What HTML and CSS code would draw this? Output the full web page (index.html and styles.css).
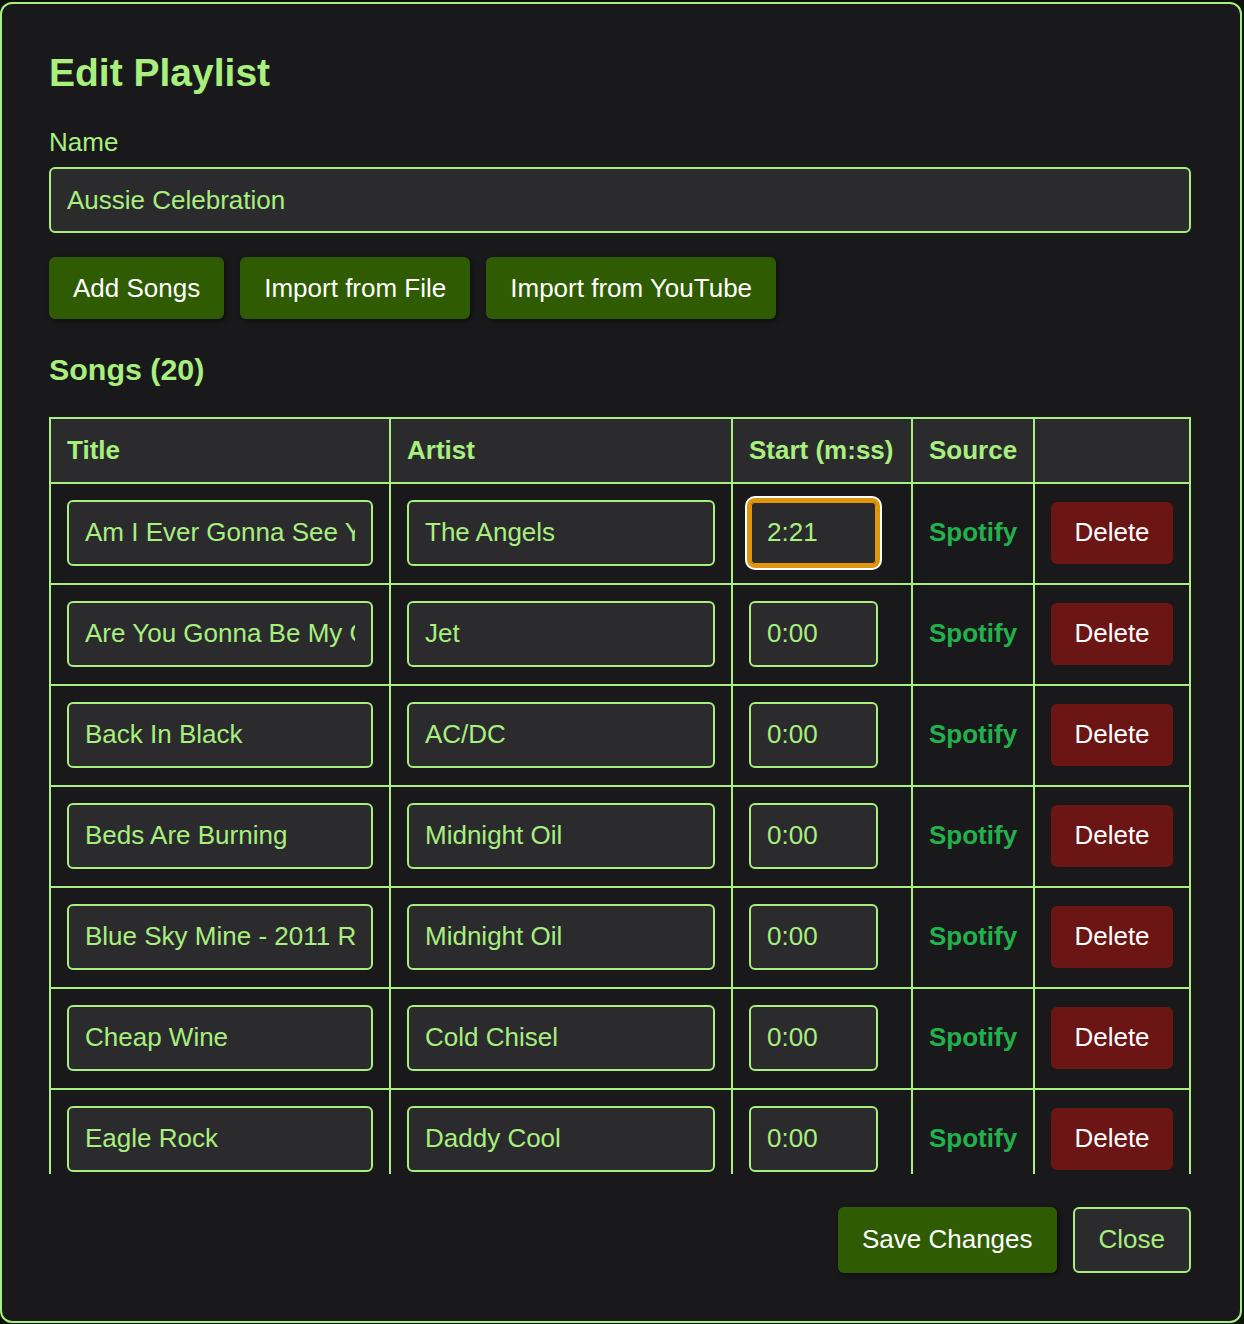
FILE: index.html
```html
<!DOCTYPE html>
<html lang="en">
<head>
<meta charset="UTF-8">
<title>Edit Playlist</title>
<link rel="stylesheet" href="styles.css">
</head>
<body>

<div class="modal">
  <h2 class="modal-title">Edit Playlist</h2>

  <label class="field-label" for="plName">Name</label>
  <input id="plName" class="text-input" value="Aussie Celebration">

  <div class="actions">
    <button type="button" class="btn primary">Add Songs</button>
    <button type="button" class="btn primary">Import from File</button>
    <button type="button" class="btn primary">Import from YouTube</button>
  </div>

  <h3 class="section-title">Songs (20)</h3>

  <!-- songs list -->
  <div class="table-wrap">
    <table class="songs">
      <colgroup>
        <col class="c-title"><col class="c-artist"><col class="c-start"><col class="c-source"><col>
      </colgroup>
      <thead>
        <tr><th>Title</th><th>Artist</th><th>Start (m:ss)</th><th>Source</th><th></th></tr>
      </thead>
      <tbody>
        <tr>
          <td><input class="cell-input" value="Am I Ever Gonna See Your Face Again"></td>
          <td><input class="cell-input" value="The Angels"></td>
          <td><input class="cell-input start focused" value="2:21"></td>
          <td class="source">Spotify</td>
          <td><button type="button" class="btn danger">Delete</button></td>
        </tr>
        <tr>
          <td><input class="cell-input" value="Are You Gonna Be My Girl"></td>
          <td><input class="cell-input" value="Jet"></td>
          <td><input class="cell-input start" value="0:00"></td>
          <td class="source">Spotify</td>
          <td><button type="button" class="btn danger">Delete</button></td>
        </tr>
        <tr>
          <td><input class="cell-input" value="Back In Black"></td>
          <td><input class="cell-input" value="AC/DC"></td>
          <td><input class="cell-input start" value="0:00"></td>
          <td class="source">Spotify</td>
          <td><button type="button" class="btn danger">Delete</button></td>
        </tr>
        <tr>
          <td><input class="cell-input" value="Beds Are Burning"></td>
          <td><input class="cell-input" value="Midnight Oil"></td>
          <td><input class="cell-input start" value="0:00"></td>
          <td class="source">Spotify</td>
          <td><button type="button" class="btn danger">Delete</button></td>
        </tr>
        <tr>
          <td><input class="cell-input" value="Blue Sky Mine - 2011 Remaster"></td>
          <td><input class="cell-input" value="Midnight Oil"></td>
          <td><input class="cell-input start" value="0:00"></td>
          <td class="source">Spotify</td>
          <td><button type="button" class="btn danger">Delete</button></td>
        </tr>
        <tr>
          <td><input class="cell-input" value="Cheap Wine"></td>
          <td><input class="cell-input" value="Cold Chisel"></td>
          <td><input class="cell-input start" value="0:00"></td>
          <td class="source">Spotify</td>
          <td><button type="button" class="btn danger">Delete</button></td>
        </tr>
        <tr>
          <td><input class="cell-input" value="Eagle Rock"></td>
          <td><input class="cell-input" value="Daddy Cool"></td>
          <td><input class="cell-input start" value="0:00"></td>
          <td class="source">Spotify</td>
          <td><button type="button" class="btn danger">Delete</button></td>
        </tr>
        <tr>
          <td><input class="cell-input" value="Friday On My Mind"></td>
          <td><input class="cell-input" value="The Easybeats"></td>
          <td><input class="cell-input start" value="0:00"></td>
          <td class="source">Spotify</td>
          <td><button type="button" class="btn danger">Delete</button></td>
        </tr>
        <tr>
          <td><input class="cell-input" value="Great Southern Land"></td>
          <td><input class="cell-input" value="Icehouse"></td>
          <td><input class="cell-input start" value="0:00"></td>
          <td class="source">Spotify</td>
          <td><button type="button" class="btn danger">Delete</button></td>
        </tr>
        <tr>
          <td><input class="cell-input" value="Holy Grail"></td>
          <td><input class="cell-input" value="Hunters &amp; Collectors"></td>
          <td><input class="cell-input start" value="0:00"></td>
          <td class="source">Spotify</td>
          <td><button type="button" class="btn danger">Delete</button></td>
        </tr>
      </tbody>
    </table>
  </div>

  <div class="footer">
    <button type="button" class="btn primary big">Save Changes</button>
    <button type="button" class="btn ghost big">Close</button>
  </div>
</div>

</body>
</html>
```
FILE: styles.css
```css
body{margin:0;background:#0d1707;font-family:"Liberation Sans",Arial,sans-serif;}
.modal{width:1242px;box-sizing:border-box;margin-top:2px;background:#19191b;border:2px solid #a8ef7e;border-radius:12px;padding:46px 49px 48px 47px;color:#a8ef7e;line-height:1.2;box-shadow:0 0 24px rgba(0,0,0,.6);}
.modal-title{margin:0 0 31px;font-size:39px;font-weight:bold;line-height:46px;}
.field-label{display:block;font-size:26px;margin-bottom:9px;}
.text-input{display:block;width:100%;height:66px;box-sizing:border-box;background:#2b2b2e;border:2px solid #a8ef7e;border-radius:6px;color:#a8ef7e;font:26px "Liberation Sans",Arial,sans-serif;padding:0 16px;outline:none;}
.actions{display:flex;gap:16px;margin-top:24px;}
.btn{height:62px;padding:0 24px;border:none;border-radius:6px;font:26px "Liberation Sans",Arial,sans-serif;cursor:pointer;}
.btn.primary{background:#2f5c02;color:#fff;box-shadow:2px 2px 5px rgba(0,0,0,.45);}
.btn.danger{background:#6b1515;color:#fff;width:122px;padding:0;}
.btn.big{height:66px;}
.btn.ghost{background:#2b2b2e;color:#a8ef7e;border:2px solid #a8ef7e;padding:0 24px;}
.section-title{margin:32px 0 29px;font-size:30.4px;font-weight:bold;line-height:1.2;}

.table-wrap{max-height:757px;overflow-y:auto;scrollbar-width:none;}
.songs{width:100%;border-collapse:collapse;table-layout:fixed;}
.c-title{width:340px;}
.c-artist{width:342px;}
.c-start{width:180px;}
.c-source{width:122px;}
.songs th,.songs td{border:2px solid #a8ef7e;text-align:left;}
.songs th{background:#2b2b2e;font-size:26px;font-weight:bold;padding:16px;line-height:31px;}
.songs td{padding:16px 16px 17px;vertical-align:middle;}
.cell-input{display:block;width:100%;height:66px;box-sizing:border-box;background:#2b2b2e;border:2px solid #a8ef7e;border-radius:6px;color:#a8ef7e;font:26px "Liberation Sans",Arial,sans-serif;padding:0 16px;outline:none;}
.cell-input.start{width:129px;}
.cell-input.focused{border-color:#e0960c;box-shadow:0 0 0 2px #e0960c,0 0 0 4px #fff,inset 0 0 0 1px #e0960c;}
.source{color:#22b14c;font-size:26px;font-weight:bold;}
.footer{display:flex;justify-content:flex-end;gap:16px;margin-top:33px;}
```
